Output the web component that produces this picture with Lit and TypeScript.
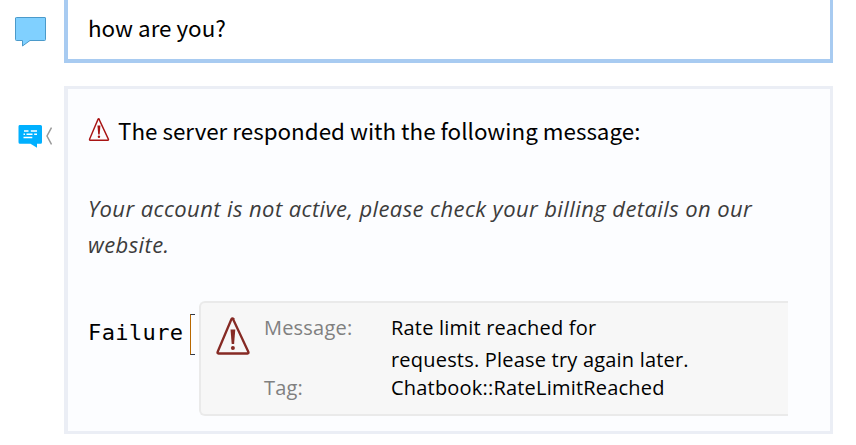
import { LitElement, html, css } from "lit";
import { customElement } from "lit/decorators.js";

@customElement("warning-icon")
class WarningIcon extends LitElement {
  static styles = css`
    :host { display: block; color: #a81414; }
    svg { display: block; width: 100%; height: 100%; }
  `;
  render() {
    return html`<svg viewBox="0 0 36 40" fill="none" stroke="currentColor">
      <path d="M18 3 L33.3 35.7 Q34 37.5 32.5 37.5 H3.5 Q2 37.5 2.7 35.7 L16.5 3 Q17.3 1.6 18.6 3Z" stroke-width="2.3" stroke-linejoin="round" />
      <path d="M15.5 13.5h4.8l-1.2 14.5h-2.4z" fill="currentColor" stroke="none" />
      <circle cx="17.9" cy="32" r="2" fill="currentColor" stroke="none" />
    </svg>`;
  }
}

@customElement("app-root")
class AppRoot extends LitElement {
  static styles = css`
    :host {
      display: block; height: 445px; overflow: hidden; background: #fff; color: #000;
      font-family: "Noto Sans CJK SC", sans-serif;
    }
    .row { display: grid; grid-template-columns: 64px 769px; }
    .gutter { display: flex; align-items: flex-start; }
    .user .gutter { padding: 16px 0 0 15px; }
    .assistant { margin-top: 23px; }
    .assistant .gutter { padding: 39px 0 0 18px; }
    .fold { margin: 2px 0 0 4px; }
    svg { display: block; }
    .cell { box-sizing: border-box; border: 3px solid #ebeef5; border-left-width: 4px; padding: 0 20px; }
    .user .cell { height: 63px; border: 4px solid #a8cbf1; border-top: 0; border-right-width: 3px; padding-top: 9px; }
    .assistant .cell { height: 348px; background: #fcfdff; padding-top: 24px; }
    .text { font-size: 22.4px; line-height: 36px; white-space: nowrap; }
    .head { display: flex; height: 36px; }
    .head .text { margin-top: -1px; }
    .small { width: 22px; height: 25px; margin: 4px 8px 0 0; }
    .detail {
      margin-top: 41px; height: 72px; color: #3c3c3c; font-style: italic; letter-spacing: 0.41px;
      font-family: "Open Sans", sans-serif; line-height: 36px; font-size: 22px; white-space: nowrap;
    }
    .failure { display: flex; align-items: flex-start; margin-top: 39px; }
    .name {
      width: 102px; margin-top: 14px; font: 22px/36px "DejaVu Sans Mono", monospace; letter-spacing: 0.4px;
    }
    .bracket {
      box-sizing: border-box; width: 5px; height: 41px; margin: 13px 4px 0 0;
      border: 1px solid #303848; border-left-color: #b86800; border-right: 0;
    }
    .panel {
      box-sizing: border-box; display: flex; width: 589px; height: 115px; background: #f7f7f7;
      border: 2px solid #eaeaea; border-right: 0; border-radius: 6px 0 0 6px; padding: 11px 0 0 14px;
      font-family: "Open Sans", sans-serif; font-size: 20px; letter-spacing: 0.2px;
    }
    .large { width: 36px; height: 40px; color: #862a24; margin: 2px 13px 0 0; }
    .fields { display: grid; grid-template-columns: 127px auto; grid-template-rows: 60px 28px; white-space: nowrap; line-height: 28px; }
    .label { color: #808080; }
    .value div + div { margin-top: 4px; }
  `;

  render() {
    return html`
      <section class="row user">
        <div class="gutter">
          <svg width="32" height="32" viewBox="0 0 32 32">
            <path d="M1.5 1.5H30Q30.5 1.5 30.5 2V23.5Q30.5 24.5 29.5 24.5H15L7.5 30V24.5H1.5Q.5 24.5 .5 23.5V2Q.5 1.5 1.5 1.5Z" fill="#80d0ff" stroke="#4b9aca" />
          </svg>
        </div>
        <div class="cell"><div class="text">how are you?</div></div>
      </section>
      <section class="row assistant">
        <div class="gutter">
          <svg width="24" height="23" viewBox="0 0 24 23">
            <path d="M1.5 0H22.5Q24 0 24 1.5V17.2Q24 18.7 22.5 18.7H19V22.7L12.5 18.7H2Q.5 18.7 .5 17.2V1.5Q.5 0 1.5 0Z" fill="#00b0ff" />
            <path d="M6 6h4.5M12.8 6h6.2M5.5 9.3h1.5M8.5 9.3h6M16.2 9.3h2.8M5.5 12.5h8.8" stroke="#fff" stroke-width="1.5" />
          </svg>
          <svg class="fold" width="6" height="18" viewBox="0 0 6 18"><path d="M5.5 .5L1 9L5.5 17.5" fill="none" stroke="#999" stroke-width="1.5" /></svg>
        </div>
        <div class="cell">
          <div class="head">
            <warning-icon class="small"></warning-icon>
            <div class="text">The server responded with the following message:</div>
          </div>
          <div class="detail">
            <div>Your account is not active, please check your billing details on our</div>
            <div>website.</div>
          </div>
          <div class="failure">
            <div class="name">Failure</div>
            <div class="bracket"></div>
            <div class="panel">
              <warning-icon class="large"></warning-icon>
              <div class="fields">
                <div class="label">Message:</div>
                <div class="value"><div>Rate limit reached for</div><div>requests. Please try again later.</div></div>
                <div class="label">Tag:</div>
                <div class="value"><div>Chatbook::RateLimitReached</div></div>
              </div>
            </div>
          </div>
        </div>
      </section>
    `;
  }
}
